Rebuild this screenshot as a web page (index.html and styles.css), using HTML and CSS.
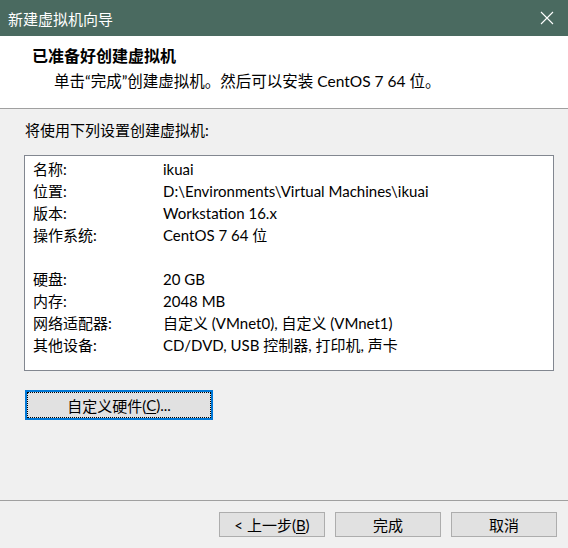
FILE: index.html
```html
<!DOCTYPE html>
<html lang="zh-CN">
<head>
<meta charset="utf-8">
<title>新建虚拟机向导</title>
<link rel="stylesheet" href="styles.css">
</head>
<body>
<div class="window">
  <div class="titlebar">
    <span class="title">新建虚拟机向导</span>
    <span class="close"><svg width="14" height="14" viewBox="0 0 14 14"><path d="M1 1 L13 13 M13 1 L1 13" stroke="#ffffff" stroke-width="1.1" fill="none"/></svg></span>
  </div>
  <div class="header">
    <div class="heading">已准备好创建虚拟机</div>
    <div class="subheading">单击“完成”创建虚拟机。然后可以安装 CentOS 7 64 位。</div>
  </div>
  <div class="sep"></div>
  <div class="content">
    <div class="intro">将使用下列设置创建虚拟机:</div>
    <div class="summary">
      <div class="row"><span class="label">名称:</span><span class="value">ikuai</span></div>
      <div class="row"><span class="label">位置:</span><span class="value">D:\Environments\Virtual Machines\ikuai</span></div>
      <div class="row"><span class="label">版本:</span><span class="value">Workstation 16.x</span></div>
      <div class="row"><span class="label">操作系统:</span><span class="value">CentOS 7 64 位</span></div>
      <div class="row blank"></div>
      <div class="row"><span class="label">硬盘:</span><span class="value">20 GB</span></div>
      <div class="row"><span class="label">内存:</span><span class="value">2048 MB</span></div>
      <div class="row"><span class="label">网络适配器:</span><span class="value">自定义 (VMnet0), 自定义 (VMnet1)</span></div>
      <div class="row"><span class="label">其他设备:</span><span class="value">CD/DVD, USB 控制器, 打印机, 声卡</span></div>
    </div>
    <button class="btn focus"><span class="focus-ring">自定义硬件(<u>C</u>)...</span></button>
  </div>
  <div class="sep"></div>
  <div class="footer">
    <button class="btn small">&lt; 上一步(<u>B</u>)</button>
    <button class="btn small">完成</button>
    <button class="btn small">取消</button>
  </div>
</div>
</body>
</html>
```
FILE: styles.css
```css
html, body {
  margin: 0;
  padding: 0;
}
body {
  width: 568px;
  height: 548px;
  background: #f0f0f0;
  font-family: "Lato", "Noto Sans CJK SC", sans-serif;
  font-size: 15px;
  color: #000;
  overflow: hidden;
}
.window {
  display: flex;
  flex-direction: column;
  height: 548px;
}
.titlebar {
  height: 36px;
  background: #4a6a60;
  color: #fff;
  display: flex;
  align-items: center;
  justify-content: space-between;
  padding: 0 14px 0 8px;
  box-sizing: border-box;
}
.title {
  font-size: 15px;
}
.close {
  display: flex;
  width: 14px;
  height: 14px;
}
.header {
  height: 72px;
  background: #fff;
  box-sizing: border-box;
  padding: 9px 0 0 32px;
}
.heading {
  font-weight: bold;
  font-size: 16px;
  line-height: 22px;
}
.subheading {
  font-size: 15.5px;
  line-height: 22px;
  margin-top: 3px;
  padding-left: 22px;
}
.sep {
  height: 1px;
  background: #a0a0a0;
}
.content {
  flex: 1;
  padding: 11px 0 0 24px;
  box-sizing: border-box;
}
.intro {
  line-height: 20px;
  padding-left: 1px;
}
.summary {
  margin-top: 15px;
  width: 530px;
  height: 216px;
  box-sizing: border-box;
  border: 1px solid #828790;
  background: #fff;
  padding: 2px 0 0 8px;
}
.row {
  display: flex;
  height: 22px;
  line-height: 22px;
}
.label {
  width: 130px;
  flex: none;
}
.btn {
  font-family: inherit;
  font-size: 15px;
  color: #000;
  background: #e1e1e1;
  border: 1px solid #adadad;
  padding: 0;
  margin: 0;
  box-sizing: border-box;
  display: flex;
  align-items: center;
  justify-content: center;
}
.btn.focus {
  margin: 19px 0 0 1px;
  width: 188px;
  height: 30px;
  border: 2px solid #0078d7;
  padding: 0;
}
.focus-ring {
  display: flex;
  align-items: center;
  justify-content: center;
  width: 100%;
  height: 100%;
  box-sizing: border-box;
  border: 1px dotted #000;
}
.footer {
  height: 47px;
  display: flex;
  justify-content: flex-end;
  align-items: flex-start;
  gap: 10px;
  padding: 11px 11px 0 0;
  box-sizing: border-box;
}
.btn.small {
  width: 106px;
  height: 25px;
}
u {
  text-decoration: underline;
  text-underline-offset: 2px;
}
```
